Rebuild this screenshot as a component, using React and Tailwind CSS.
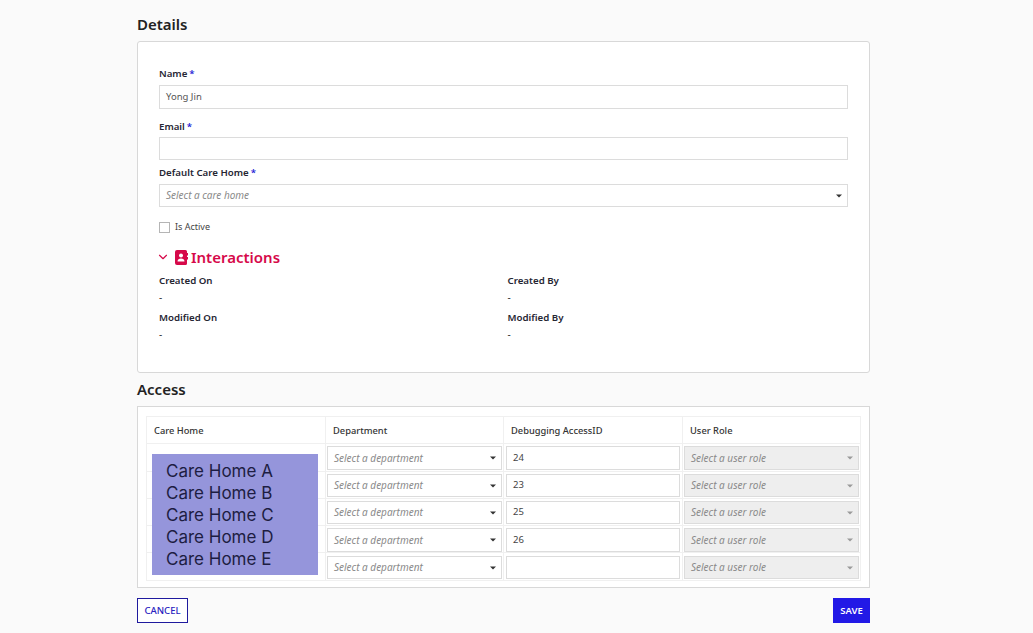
import React from "react";
import { ChevronDown } from "lucide-react";

const font = "font-['Noto_Sans','Open_Sans',sans-serif]";

function Label({ children, required }) {
  return (
    <div className="text-[9.7px] leading-[14px] font-semibold text-[#262633]">
      {children}
      {required && <span className="text-[#2a1fd6] ml-[2px]">*</span>}
    </div>
  );
}

function Caret({ muted }) {
  return (
    <svg width="6" height="4" viewBox="0 0 6 4" className="shrink-0">
      <path d="M0 0.5h6L3 3.5z" fill={muted ? "#9a9a9a" : "#333333"} />
    </svg>
  );
}

function Select({ placeholder, disabled, className = "" }) {
  return (
    <div
      className={`flex items-center justify-between border border-[#dcdcdc] pl-[6px] pr-[5px] ${
        disabled ? "bg-[#eeeeee]" : "bg-white"
      } ${className}`}
    >
      <span className="text-[10px] italic text-[#8a8a8a]">{placeholder}</span>
      <Caret muted={disabled} />
    </div>
  );
}

function Info({ label, className = "" }) {
  return (
    <div className={className}>
      <Label>{label}</Label>
      <div className="text-[10px] leading-[14px] mt-[2px] text-[#333333]">-</div>
    </div>
  );
}

const rows = [
  { id: "24", h: "h-[28px]", ih: "h-[24px]", pt: "pt-[2px]" },
  { id: "23", h: "h-[27px]", ih: "h-[23px]", pt: "pt-[2px]" },
  { id: "25", h: "h-[27px]", ih: "h-[23px]", pt: "pt-[2px]" },
  { id: "26", h: "h-[27px]", ih: "h-[24px]", pt: "pt-[2px]" },
  { id: "", h: "h-[28px]", ih: "h-[23px]", pt: "pt-[3px]" },
];

const cell = "border-r border-b border-[#f0f0f0] flex items-start";

export default function App() {
  return (
    <div className={`${font} bg-[#fafafa] h-[633px] w-[1033px] overflow-hidden pl-[137px] pr-[163px] text-[#262633]`}>
      <h2 className="text-[15px] leading-[20px] font-semibold pt-[14px] pb-[7px] text-[#222222]">Details</h2>

      {/* Details */}
      <div className="h-[332px] bg-white border border-[#d8d8d8] rounded-[3px] pl-[21px] pr-[21px] pt-[25px]">
        <Label required>Name</Label>
        <div className="mt-[4px] h-[24px] border border-[#dcdcdc] flex items-center px-[6px] text-[9.5px] text-[#555555]">
          Yong Jin
        </div>
        <div className="mt-[11px]">
          <Label required>Email</Label>
        </div>
        <div className="mt-[3px] h-[23px] border border-[#dcdcdc]" />
        <div className="mt-[6px]">
          <Label required>Default Care Home</Label>
        </div>
        <Select placeholder="Select a care home" className="mt-[4px] h-[23px]" />

        <div className="mt-[15px] flex items-center gap-[5px]">
          <div className="w-[11px] h-[11px] border border-[#b5b5b5] bg-white" />
          <span className="text-[9px] leading-[11px] text-[#444444] -translate-y-[1px]">Is Active</span>
        </div>

        <div className="mt-[14px] flex items-center text-[#d6094a]">
          <ChevronDown size={14} strokeWidth={2} className="-ml-[3px]" />
          <svg width="13" height="15" viewBox="0 0 13 15" className="ml-[5px]">
            <path
              d="M2 0h8.5A1.5 1.5 0 0 1 12 1.5V3h1v2.500h-1V7h1v2.500h-1v4A1.500 1.500 0 0 1 10.500 15H2a2 2 0 0 1-2-2V2a2 2 0 0 1 2-2z"
              fill="currentColor"
            />
            <circle cx="6" cy="5.500" r="2" fill="#ffffff" />
            <path d="M2.500 11.500c0-2 1.500-3 3.500-3s3.500 1 3.500 3z" fill="#ffffff" />
          </svg>
          <span className="ml-[3px] text-[15px] leading-[20px] font-semibold">Interactions</span>
        </div>

        <div className="mt-[7px] grid grid-cols-2 gap-x-0">
          <Info label="Created On" />
          <Info label="Created By" className="pl-[4px]" />
          <Info label="Modified On" className="mt-[7px]" />
          <Info label="Modified By" className="mt-[7px] pl-[4px]" />
        </div>
      </div>

      <h2 className="text-[15px] leading-[20px] font-semibold pt-[6px] pb-[7px] text-[#222222]">Access</h2>

      {/* Access table */}
      <div className="h-[182px] bg-white border border-[#d8d8d8] px-[8px] pt-[9px]">
        <div className="relative border-l border-t border-[#f0f0f0]">
          <div className="grid grid-cols-[179px_178px_179px_178px] h-[27px] text-[9.3px] font-medium text-[#333333]">
            <div className={`${cell} pl-[7px] pt-[7px]`}>Care Home</div>
            <div className={`${cell} pl-[7px] pt-[7px]`}>Department</div>
            <div className={`${cell} pl-[7px] pt-[7px]`}>Debugging AccessID</div>
            <div className={`${cell} pl-[7px] pt-[7px]`}>User Role</div>
          </div>
          {rows.map((r, i) => (
            <div key={i} className={`grid grid-cols-[179px_178px_179px_178px] ${r.h}`}>
              <div className={cell} />
              <div className={`${cell} px-[1px] ${r.pt}`}>
                <Select placeholder="Select a department" className={`w-full ${r.ih}`} />
              </div>
              <div className={`${cell} px-[2px] ${r.pt}`}>
                <div className={`w-full ${r.ih} border border-[#dcdcdc] bg-white flex items-center px-[6px] text-[9.5px] text-[#444444]`}>
                  {r.id}
                </div>
              </div>
              <div className={`${cell} px-[1px] ${r.pt}`}>
                <Select placeholder="Select a user role" disabled className={`w-full ${r.ih}`} />
              </div>
            </div>
          ))}

          {/* Block laid over the care home names */}
          <div className="absolute left-[5px] top-[37px] w-[166px] h-[121px] bg-[#9595db] pl-[14px] pt-[6px] font-['Inter',sans-serif] text-[17px] leading-[22px] text-[#1d1d42]">
            <div>Care Home A</div>
            <div>Care Home B</div>
            <div>Care Home C</div>
            <div>Care Home D</div>
            <div>Care Home E</div>
          </div>
        </div>
      </div>

      <div className="flex justify-between mt-[10px]">
        <button className="w-[51px] h-[25px] pt-[1px] border border-[#1f1a9e] bg-white text-[#2a22c0] text-[9.5px] font-medium">
          CANCEL
        </button>
        <button className="w-[37px] h-[25px] pt-[1px] bg-[#2219e6] text-white text-[9.5px] font-semibold">SAVE</button>
      </div>
    </div>
  );
}
